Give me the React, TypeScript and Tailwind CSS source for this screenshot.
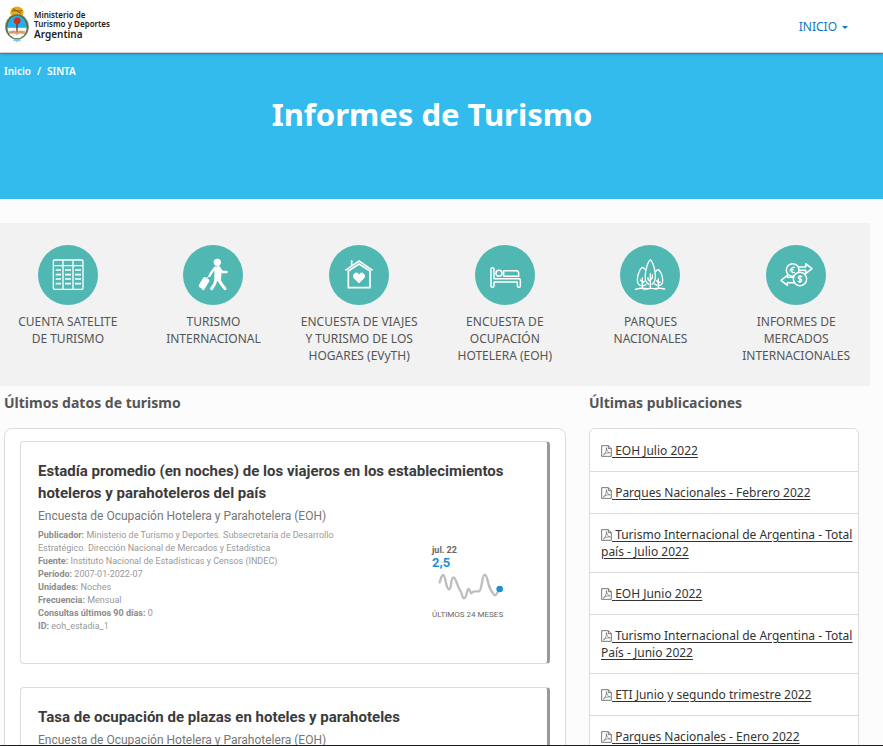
import type { ReactNode } from "react";

const SANS = "font-['Noto_Sans',sans-serif]";
const ROBOTO = "font-[Roboto,sans-serif]";

function Emblem() {
  return (
    <svg viewBox="0 0 72 110" className="h-[37px] w-6 shrink-0" aria-hidden="true">
      <ellipse cx="36" cy="19" rx="20" ry="18" fill="#e9a91d" />
      <path d="M20 14 L52 14 M24 7 L48 22" stroke="#8a5a12" strokeWidth="3" />
      <ellipse cx="36" cy="62" rx="35" ry="38" fill="#56704a" />
      <ellipse cx="36" cy="62" rx="34" ry="37" fill="none" stroke="#8b8a6a" strokeWidth="3" strokeDasharray="5 5" />
      <path d="M7 65 A29 36 0 0 1 65 65 Z" fill="#22b0ea" />
      <path d="M7 65 A29 31 0 0 0 65 65 Z" fill="#fbfbf8" />
      <path d="M36 46 V84" stroke="#5a3a22" strokeWidth="4" />
      <path d="M26 44 Q28 33 36 34 Q45 32 47 44 Q45 55 36 55 Q27 54 26 44 Z" fill="#d22b20" />
      <path d="M9 76 L27 73 L36 77 L45 73 L63 76 L59 83 L42 82 L36 85 L29 82 L13 83 Z" fill="#d99a6c" />
      <path d="M27 98 L36 101 L45 98 L47 106 L39 104 L36 110 L33 104 L25 106 Z" fill="#6cc6f0" />
    </svg>
  );
}

function PdfIcon() {
  return (
    <svg viewBox="0 0 33 36" className="inline-block h-3 w-[11px] align-[-2px]" fill="none" stroke="#555" strokeWidth="2.4" aria-hidden="true">
      <path d="M2 2 H22 L31 11 V34 H2 Z M22 2 V11 H31" />
      <path d="M7 30 C13 26 17 18 16 8 C18 18 21 23 28 24 C20 22 13 25 7 30 Z" strokeWidth="1.8" />
    </svg>
  );
}

function TableGlyph() {
  return (
    <g fill="none" stroke="#fff" strokeWidth="4">
      <rect x="46" y="45" width="89" height="88" rx="4" />
      <path d="M46 62 H135 M75 45 V133 M105 45 V133" />
      <path d="M53 75 H69 M81 75 H99 M111 75 H129 M53 89 H69 M81 89 H99 M111 89 H129 M53 102 H69 M81 102 H99 M111 102 H129 M53 116 H69 M81 116 H99 M111 116 H129" strokeWidth="5" />
    </g>
  );
}

function TravellerGlyph() {
  return (
    <g fill="#fff" stroke="#fff" strokeLinecap="round" strokeLinejoin="round">
      <circle cx="103" cy="52" r="11" stroke="none" />
      <path d="M97 68 L108 66 L113 76 L111 105 L97 104 Z" strokeWidth="6" />
      <path d="M96 68 L87 80 L80 92 M110 71 L118 81 L131 81" fill="none" strokeWidth="7" />
      <path d="M99 104 L95 117 L86 131 M107 104 L116 118 L126 131" fill="none" strokeWidth="9" />
      <rect x="55" y="99" width="17" height="31" rx="3" transform="rotate(31 63 114)" strokeWidth="4" />
      <path d="M73 98 L79 93" strokeWidth="3" />
      <circle cx="60" cy="132" r="3" />
    </g>
  );
}

function HomeGlyph() {
  return (
    <g fill="none" stroke="#fff" strokeWidth="5">
      <path d="M49 76 L90 48 L131 76 M68 62 V46" />
      <path d="M58 128 V78 L90 57 L123 78 V128 Z" />
      <path d="M90 114 L75 99 C69 89 82 77 90 89 C98 77 111 89 105 99 Z" fill="#fff" strokeWidth="3" />
    </g>
  );
}

function BedGlyph() {
  return (
    <g fill="none" stroke="#fff" strokeWidth="4.5" strokeLinejoin="round">
      <path d="M48 72 Q48 68 52 68 Q57 68 57 72 V101 H132 Q136 101 136 105 V124 Q136 127 132 127 Q127 127 127 123 V111 H57 V124 Q57 127 52 127 Q48 127 48 124 Z" />
      <circle cx="72" cy="85" r="9" />
      <path d="M88 77 H124 Q131 77 131 85 V94 H88 Q86 94 86 92 V79 Q86 77 88 77 Z" />
    </g>
  );
}

function TreesGlyph() {
  return (
    <g fill="none" stroke="#fff" strokeWidth="4" strokeLinecap="round" strokeLinejoin="round">
      <path d="M86 118 C74 112 73 100 77 80 C80 63 86 48 91 44 C96 48 102 63 105 80 C108 100 107 112 96 118" />
      <path d="M75 73 Q70 67 67 67 C59 71 52 91 52 105 C52 117 59 122 64 122 M71 122 L78 119" />
      <path d="M107 80 Q112 73 115 74 C122 78 128 93 128 106 C128 116 123 121 118 121 M111 121 L104 117" />
      <path d="M91 128 V86 M91 104 L97 98 V90 M91 110 L84 103 V98 M67 128 V99 M67 115 L73 109 M67 110 L61 105 M115 128 V101 M115 116 L120 111 M115 112 L110 107" />
      <path d="M46 133 Q66 127 84 132 M72 134 Q92 127 110 133 M103 131 Q120 128 134 132" />
    </g>
  );
}

function ExchangeGlyph() {
  return (
    <g fill="none" stroke="#fff" strokeWidth="4.5" strokeLinejoin="round">
      <path d="M97 66 H119 V56 L138 71 L119 86 V76 H100" />
      <path d="M84 97 H64 V91 L45 106 L64 121 V113 H85" />
      <circle cx="80" cy="75" r="19" />
      <circle cx="102" cy="102" r="20" fill="#50b7b2" />
      <path d="M87 68 Q77 63 75 75 Q77 87 87 82 M71 73 H83 M71 78 H82" strokeWidth="3.5" />
      <path d="M109 96 Q102 91 97 96 Q96 101 102 102 Q109 103 107 108 Q102 113 95 108 M102 90 V114" strokeWidth="3.5" />
    </g>
  );
}

const topics: { lines: string[]; glyph: ReactNode }[] = [
  { lines: ["CUENTA SATELITE", "DE TURISMO"], glyph: <TableGlyph /> },
  { lines: ["TURISMO", "INTERNACIONAL"], glyph: <TravellerGlyph /> },
  { lines: ["ENCUESTA DE VIAJES", "Y TURISMO DE LOS", "HOGARES (EVyTH)"], glyph: <HomeGlyph /> },
  { lines: ["ENCUESTA DE", "OCUPACIÓN", "HOTELERA (EOH)"], glyph: <BedGlyph /> },
  { lines: ["PARQUES", "NACIONALES"], glyph: <TreesGlyph /> },
  { lines: ["INFORMES DE", "MERCADOS", "INTERNACIONALES"], glyph: <ExchangeGlyph /> },
];

const publications = [
  "EOH Julio 2022",
  "Parques Nacionales - Febrero 2022",
  "Turismo Internacional de Argentina - Total país - Julio 2022",
  "EOH Junio 2022",
  "Turismo Internacional de Argentina - Total País - Junio 2022",
  "ETI Junio y segundo trimestre 2022",
  "Parques Nacionales - Enero 2022",
];

const details = [
  ["Publicador:", "Ministerio de Turismo y Deportes. Subsecretaría de Desarrollo Estratégico. Dirección Nacional de Mercados y Estadística"],
  ["Fuente:", "Instituto Nacional de Estadísticas y Censos (INDEC)"],
  ["Período:", "2007-01-2022-07"],
  ["Unidades:", "Noches"],
  ["Frecuencia:", "Mensual"],
  ["Consultas últimos 90 días:", "0"],
  ["ID:", "eoh_estadia_1"],
];

function DataCard({ title, children }: { title: string; children?: ReactNode }) {
  return (
    <article className={`${ROBOTO} h-[223px] rounded border border-r-[3px] border-[#dcdcdc] border-r-[#999] bg-white px-[17px] pt-[18px]`}>
      <h3 className="text-[15px] leading-[22px] font-bold text-[#3b3b3b]">{title}</h3>
      <p className="text-[12px] leading-6 text-[#767676]">Encuesta de Ocupación Hotelera y Parahotelera (EOH)</p>
      {children}
    </article>
  );
}

export default function App() {
  return (
    <div className={`${SANS} flex h-screen flex-col overflow-hidden border-b border-[#1c1c1c] bg-[#fcfcfc] text-[#555]`}>
      <header className="relative flex h-[53px] shrink-0 items-center justify-between border-b border-[#d5d0cc] bg-white pr-[35px] pl-[5px] shadow-[0_1px_2px_rgba(0,0,0,0.35)]">
        <a href="#" className="flex items-center gap-[5px] pb-[3px] text-[#222]">
          <Emblem />
          <span className="text-[8px] leading-[9px] font-semibold">
            <span className="block">Ministerio de</span>
            <span className="block">Turismo y Deportes</span>
            <span className="block text-[10px] leading-[12px]">Argentina</span>
          </span>
        </a>
        <button type="button" className="flex items-center gap-[5px] pt-0.5 text-[12px] leading-5 text-[#0c79be]">
          INICIO
          <span className="border-x-[3px] border-t-[3px] border-x-transparent border-t-[#0c79be]" />
        </button>
      </header>

      <section className="h-[146px] shrink-0 bg-[#33bbed] px-1 pt-[11px] text-white">
        <nav className="flex gap-[6px] text-[10px] leading-[14px] font-semibold">
          <a href="#">Inicio</a>
          <span>/</span>
          <a href="#">SINTA</a>
        </nav>
        <h1 className="mt-4 pr-[19px] text-center text-[31px] leading-10 font-bold">Informes de Turismo</h1>
      </section>

      <section className="mt-6 mr-[13px] h-[163px] shrink-0 bg-[#f2f2f2] pt-[22px]">
        <div className="mr-px -ml-[5px] grid grid-cols-6">
          {topics.map((t) => (
            <a key={t.lines.join(" ")} href="#" className="flex flex-col items-center text-center text-[12px] leading-[17px] whitespace-nowrap">
              <svg viewBox="0 0 180 180" className="mb-2 h-[60px] w-[60px]" aria-hidden="true">
                <circle cx="90" cy="90" r="90" fill="#50b7b2" />
                {t.glyph}
              </svg>
              {t.lines.map((l) => (
                <span key={l}>{l}</span>
              ))}
            </a>
          ))}
        </div>
      </section>

      <main className="flex gap-[23px] pt-[7px] pr-6 pl-1">
        <section className="min-w-0 flex-1">
          <h2 className="mb-[15px] text-[14px] leading-5 font-bold">Últimos datos de turismo</h2>
          <div className="flex flex-col gap-[23px] rounded-lg border border-[#dcdcdc] bg-white px-[15px] py-3">
            <DataCard title="Estadía promedio (en noches) de los viajeros en los establecimientos hoteleros y parahoteleros del país">
              <div className="mt-px flex items-start justify-between pr-6">
                <dl className="w-[315px] text-[9px] leading-[13px] text-[#999]">
                  {details.map(([k, v]) => (
                    <div key={k}>
                      <dt className="inline font-bold text-[#8c8c8c]">{k}</dt> <dd className="inline">{v}</dd>
                    </div>
                  ))}
                </dl>
                <div className="mt-[15px] w-[74px] text-[#666]">
                  <p className="text-[9px] leading-3 font-bold">jul. 22</p>
                  <p className="text-[13px] leading-[14px] font-bold text-[#1c90d4]">2,5</p>
                  <svg viewBox="275 394 225 105" className="h-[35px] w-[75px]" fill="none" aria-label="Últimos 24 meses">
                    <path
                      d="M298 431 C302 418 305 408 309 409 C316 412 317 452 326 452 C334 452 331 415 339 416 C349 418 350 445 360 456 C366 464 365 479 371 479 C380 479 378 452 385 451 C388 451 390 464 393 464 C396 458 400 458 407 458 H415 C426 458 424 409 433 408 C442 408 443 445 453 456 C457 462 460 470 464 470 C468 470 470 462 478 451"
                      stroke="#bdbdbd"
                      strokeWidth="7"
                      strokeLinecap="round"
                    />
                    <circle cx="478" cy="451" r="10" fill="#1c90d4" />
                  </svg>
                  <p className="mt-1 text-[8px] leading-3 whitespace-nowrap">ÚLTIMOS 24 MESES</p>
                </div>
              </div>
            </DataCard>
            <DataCard title="Tasa de ocupación de plazas en hoteles y parahoteles" />
          </div>
        </section>

        <section className="w-[270px] shrink-0">
          <h2 className="mb-[15px] text-[14px] leading-5 font-bold">Últimas publicaciones</h2>
          <ul className="rounded-md border border-[#dcdcdc] bg-white pt-px">
            {publications.map((p) => (
              <li key={p} className="border-b border-[#dcdcdc] py-3 pr-0.5 pl-[11px] text-[12px] leading-[17px] text-[#333]">
                <a href="#" className="underline underline-offset-2">
                  <PdfIcon /> {p}
                </a>
              </li>
            ))}
          </ul>
        </section>
      </main>
    </div>
  );
}
